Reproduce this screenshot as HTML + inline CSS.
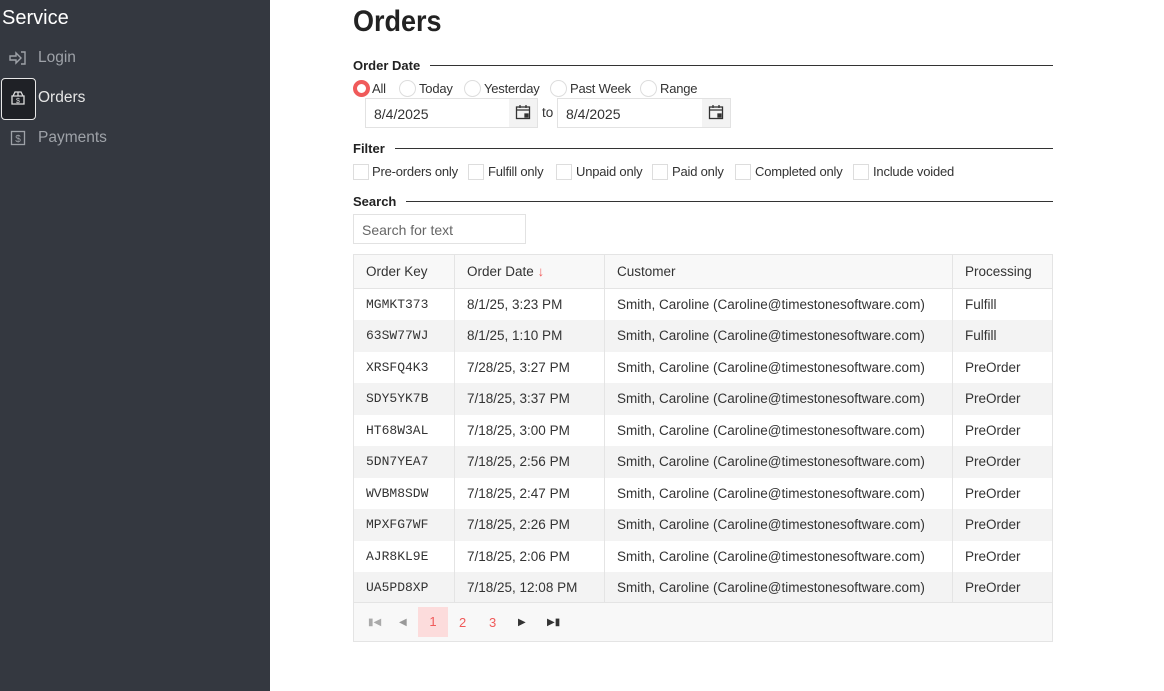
<!DOCTYPE html>
<html><head><meta charset="utf-8"><style>
*{box-sizing:border-box;margin:0;padding:0}
body{width:1164px;height:691px;overflow:hidden;font-family:"Liberation Sans",sans-serif;background:#fff;color:#333;position:relative}
.side{position:absolute;left:0;top:0;width:270px;height:691px;background:#343840}
.side h1{position:absolute;left:2px;top:7px;font-size:20px;font-weight:normal;color:#fff}
.nav{position:absolute;left:38px;font-size:15.5px;color:#9ea2a8}
.ic{position:absolute}
.sel{position:absolute;left:1px;top:78px;width:35px;height:42px;border:1.5px solid #e8e8e8;border-radius:4px;background:#1f2126}
h2{position:absolute;left:353px;top:5px;font-size:30px;font-weight:bold;color:#222;transform:scaleX(.9);transform-origin:left}
.leg{position:absolute;left:353px;width:700px;font-size:13px;font-weight:bold;color:#222;display:flex;align-items:center}
.leg::after{content:"";flex:1;height:1px;background:#333;margin-left:10px}
.t{position:absolute;font-size:13.5px;color:#333;white-space:nowrap}
.f{font-size:13px;letter-spacing:-.2px}
.radio{position:absolute;width:17px;height:17px;border-radius:50%;border:1px solid #ddd;background:#fff}
.cb{position:absolute;width:16px;height:16px;border:1px solid #ddd;background:#fff}
.inp{position:absolute;height:30px;border:1px solid #e2e2e2;font-size:14px;padding:7px 8px;color:#333}
.cal{position:absolute;top:0;right:0;width:28px;height:28px;background:#f3f3f3}
table{position:absolute;left:353px;top:254px;width:700px;border-collapse:collapse;font-size:13.5px}
td,th{border-left:1px solid #e4e4e4;border-right:1px solid #e4e4e4;padding:0 12px;height:31.5px;text-align:left;font-weight:normal;white-space:nowrap}
th{height:34px;background:#f8f8f8;border-top:1px solid #e4e4e4;border-bottom:1px solid #e4e4e4}
tr:nth-child(odd) td{background:#f3f3f3}
.k{font-family:"Liberation Mono",monospace;font-size:13px}
.pg{position:absolute;left:353px;top:602px;width:700px;height:40px;background:#f8f8f8;border:1px solid #e4e4e4}
.pg span{position:absolute;top:0;height:40px;line-height:40px;font-size:13px}
</style></head><body>
<div class="side">
<h1>Service</h1>
<svg class="ic" style="left:9px;top:50px" width="18" height="16" viewBox="0 0 18 16" fill="none" stroke="#9ea2a8" stroke-width="1.4"><path d="M1 6h6V3l5 5-5 5v-3H1z"/><path d="M12 2h4v12h-4"/></svg>
<div class="nav" style="top:49px">Login</div>
<div class="sel"></div>
<svg class="ic" style="left:10px;top:90px" width="16" height="16" viewBox="0 0 16 16" fill="none" stroke="#ddd" stroke-width="1.3"><path d="M2 6h12v8H2z M3 6l2-4h6l2 4 M8 2v4"/><text x="8" y="13" font-size="7" fill="#ddd" stroke="none" text-anchor="middle">$</text></svg>
<div class="nav" style="top:89px;color:#e6e6e6">Orders</div>
<svg class="ic" style="left:10px;top:130px" width="16" height="16" viewBox="0 0 16 16" fill="none" stroke="#9ea2a8" stroke-width="1.3"><rect x="1.5" y="1.5" width="13" height="13"/><text x="8" y="12" font-size="10" fill="#9ea2a8" stroke="none" text-anchor="middle">$</text></svg>
<div class="nav" style="top:129px">Payments</div>
</div>
<h2>Orders</h2>
<div class="leg" style="top:58px">Order Date</div>
<div class="radio" style="left:353px;top:80px;border:4px solid #f05a5a"></div><div class="t f" style="left:372px;top:81px">All</div>
<div class="radio" style="left:399px;top:80px"></div><div class="t f" style="left:419px;top:81px">Today</div>
<div class="radio" style="left:464px;top:80px"></div><div class="t f" style="left:484px;top:81px">Yesterday</div>
<div class="radio" style="left:550px;top:80px"></div><div class="t f" style="left:570px;top:81px">Past Week</div>
<div class="radio" style="left:640px;top:80px"></div><div class="t f" style="left:660px;top:81px">Range</div>
<div class="inp" style="left:365px;top:98px;width:173px">8/4/2025<div class="cal"></div></div>
<svg class="ic" style="left:515px;top:104px" width="16" height="16" viewBox="0 0 16 16" fill="none" stroke="#333" stroke-width="1.3"><rect x="1.5" y="3" width="13" height="11.5"/><path d="M1.5 6h13M5 1v3M11 1v3"/><rect x="10" y="10" width="3" height="3" fill="#333"/></svg>
<div class="t" style="left:542px;top:105px">to</div>
<div class="inp" style="left:557px;top:98px;width:174px">8/4/2025<div class="cal"></div></div>
<svg class="ic" style="left:708px;top:104px" width="16" height="16" viewBox="0 0 16 16" fill="none" stroke="#333" stroke-width="1.3"><rect x="1.5" y="3" width="13" height="11.5"/><path d="M1.5 6h13M5 1v3M11 1v3"/><rect x="10" y="10" width="3" height="3" fill="#333"/></svg>
<div class="leg" style="top:141px">Filter</div>
<div class="cb" style="left:353px;top:164px"></div><div class="t f" style="left:372px;top:164px">Pre-orders only</div>
<div class="cb" style="left:468px;top:164px"></div><div class="t f" style="left:488px;top:164px">Fulfill only</div>
<div class="cb" style="left:556px;top:164px"></div><div class="t f" style="left:576px;top:164px">Unpaid only</div>
<div class="cb" style="left:652px;top:164px"></div><div class="t f" style="left:672px;top:164px">Paid only</div>
<div class="cb" style="left:735px;top:164px"></div><div class="t f" style="left:755px;top:164px">Completed only</div>
<div class="cb" style="left:853px;top:164px"></div><div class="t f" style="left:873px;top:164px">Include voided</div>
<div class="leg" style="top:194px">Search</div>
<div class="inp" style="left:353px;top:214px;width:173px;color:#666">Search for text</div>
<table>
<tr><th style="width:101px">Order Key</th><th style="width:150px">Order Date <span style="color:#f05a5a">↓</span></th><th style="width:348px">Customer</th><th>Processing</th></tr>
<tr><td class="k">MGMKT373</td><td>8/1/25, 3:23 PM</td><td>Smith, Caroline (Caroline@timestonesoftware.com)</td><td>Fulfill</td></tr>
<tr><td class="k">63SW77WJ</td><td>8/1/25, 1:10 PM</td><td>Smith, Caroline (Caroline@timestonesoftware.com)</td><td>Fulfill</td></tr>
<tr><td class="k">XRSFQ4K3</td><td>7/28/25, 3:27 PM</td><td>Smith, Caroline (Caroline@timestonesoftware.com)</td><td>PreOrder</td></tr>
<tr><td class="k">SDY5YK7B</td><td>7/18/25, 3:37 PM</td><td>Smith, Caroline (Caroline@timestonesoftware.com)</td><td>PreOrder</td></tr>
<tr><td class="k">HT68W3AL</td><td>7/18/25, 3:00 PM</td><td>Smith, Caroline (Caroline@timestonesoftware.com)</td><td>PreOrder</td></tr>
<tr><td class="k">5DN7YEA7</td><td>7/18/25, 2:56 PM</td><td>Smith, Caroline (Caroline@timestonesoftware.com)</td><td>PreOrder</td></tr>
<tr><td class="k">WVBM8SDW</td><td>7/18/25, 2:47 PM</td><td>Smith, Caroline (Caroline@timestonesoftware.com)</td><td>PreOrder</td></tr>
<tr><td class="k">MPXFG7WF</td><td>7/18/25, 2:26 PM</td><td>Smith, Caroline (Caroline@timestonesoftware.com)</td><td>PreOrder</td></tr>
<tr><td class="k">AJR8KL9E</td><td>7/18/25, 2:06 PM</td><td>Smith, Caroline (Caroline@timestonesoftware.com)</td><td>PreOrder</td></tr>
<tr><td class="k">UA5PD8XP</td><td>7/18/25, 12:08 PM</td><td>Smith, Caroline (Caroline@timestonesoftware.com)</td><td>PreOrder</td></tr>
</table>
<div class="pg">
<span style="left:14px;color:#aaa;font-size:10px">▮◀</span>
<span style="left:45px;color:#999;font-size:10px">◀</span>
<span style="left:64px;width:30px;top:4px;height:30px;line-height:30px;background:#fcdcdc;color:#f05a5a;text-align:center">1</span>
<span style="left:105px;color:#f05a5a">2</span>
<span style="left:135px;color:#f05a5a">3</span>
<span style="left:164px;color:#333;font-size:10px">▶</span>
<span style="left:193px;color:#333;font-size:10px">▶▮</span>
</div>
</body></html>
